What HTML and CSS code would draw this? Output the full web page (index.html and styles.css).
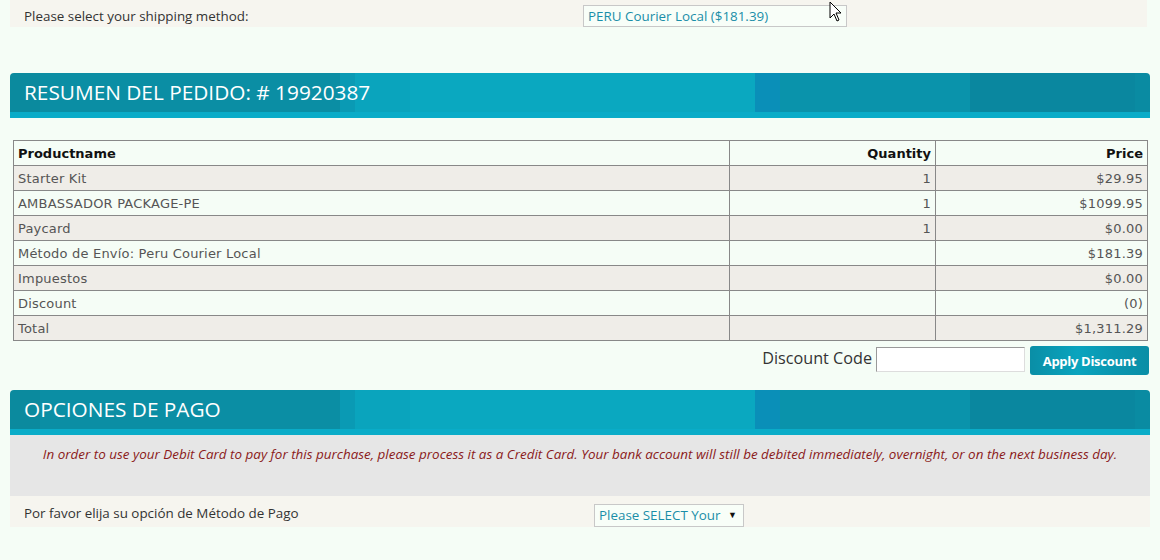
FILE: index.html
```html
<!DOCTYPE html>
<html>
<head>
<meta charset="utf-8">
<link rel="stylesheet" href="styles.css">
</head>
<body>
<div class="page">
  <div class="field-row top-row">
    <div class="field-label">Please select your shipping method:</div>
    <div class="select ship-select">PERU Courier Local ($181.39)</div>
  </div>

  <div class="section-head head-1">RESUMEN DEL PEDIDO: # 19920387</div>

  <table class="order">
    <thead>
      <tr><th class="c1">Productname</th><th class="num">Quantity</th><th class="num">Price</th></tr>
    </thead>
    <tbody>
      <tr class="alt"><td>Starter Kit</td><td class="num">1</td><td class="num">$29.95</td></tr>
      <tr><td>AMBASSADOR PACKAGE-PE</td><td class="num">1</td><td class="num">$1099.95</td></tr>
      <tr class="alt"><td>Paycard</td><td class="num">1</td><td class="num">$0.00</td></tr>
      <tr><td>Método de Envío: Peru Courier Local</td><td class="num"></td><td class="num">$181.39</td></tr>
      <tr class="alt"><td>Impuestos</td><td class="num"></td><td class="num">$0.00</td></tr>
      <tr><td>Discount</td><td class="num"></td><td class="num">(0)</td></tr>
      <tr class="alt"><td>Total</td><td class="num"></td><td class="num">$1,311.29</td></tr>
    </tbody>
  </table>

  <div class="discount-row">
    <span class="discount-label">Discount Code</span>
    <span class="discount-input"></span>
    <span class="btn">Apply Discount</span>
  </div>

  <div class="section-head head-2">OPCIONES DE PAGO</div>
  <div class="note">In order to use your Debit Card to pay for this purchase, please process it as a Credit Card. Your bank account will still be debited immediately, overnight, or on the next business day.</div>
  <div class="field-row pay-row">
    <div class="field-label">Por favor elija su opción de Método de Pago</div>
    <div class="select pay-select">Please SELECT Your <span class="caret">▼</span></div>
  </div>
</div>
<svg class="cursor" width="14" height="22" viewBox="0 0 14 22"><path d="M1 1 L1 17 L5 13 L8 20 L10 19 L7 12 L12 12 Z" fill="#fff" stroke="#000" stroke-width="1"/></svg>
</body>
</html>
```

FILE: styles.css
```css
html, body { margin: 0; padding: 0; }
body {
  background: #f5fdf6;
  font-family: "Open Sans", "Liberation Sans", sans-serif;
  color: #333;
  width: 1160px;
  height: 560px;
  overflow: hidden;
  position: relative;
}
.page { padding: 0 10px; }

.field-row {
  display: flex;
  align-items: flex-end;
  background: #f6f5ef;
  font-size: 13.4px;
  box-sizing: border-box;
}
.field-label { padding-left: 14px; align-self: center; }
.top-row { height: 27px; width: 1137px; }
.top-row .field-label { padding-top: 4px; width: 559px; }
.select {
  border: 1px solid #c8c8c8;
  background: #f8fef8;
  color: #1a8ea8;
  font-size: 13.4px;
  box-sizing: border-box;
  height: 22px;
  line-height: 20px;
  padding-left: 4px;
  white-space: nowrap;
}
.ship-select { width: 264px; }

.section-head {
  height: 45px;
  box-sizing: border-box;
  border-radius: 4px 4px 0 0;
  color: #fff;
  font-size: 20.8px;
  padding: 4px 0 0 14px;
  line-height: 30px;
  background:
    linear-gradient(#0aacc8, #0aacc8) bottom / 100% 6px no-repeat,
    linear-gradient(90deg,
      #0b8a9e 0, #0b8a9e 30px,
      #0b8ea4 30px, #0b8ea4 330px,
      #0a9ab4 330px, #0a9ab4 345px,
      #0aa4bd 345px, #0aa4bd 400px,
      #0aa8c0 400px, #0aa8c0 745px,
      #0a8fb8 745px, #0a8fb8 770px,
      #0a93ab 770px, #0a93ab 960px,
      #0a879f 960px, #0a879f 1125px,
      #0a8ba2 1125px);
}
.head-1 { margin-top: 46px; }

.order {
  margin: 22px 0 0 3px;
  width: 1135px;
  border-collapse: collapse;
  font-family: "DejaVu Sans", Verdana, sans-serif;
  font-size: 13px;
  letter-spacing: 0.2px;
  color: #555;
}
.order th, .order td {
  border: 1px solid #888;
  height: 25px;
  padding: 0 4px;
  box-sizing: border-box;
  text-align: left;
}
.order th { color: #111; font-weight: bold; letter-spacing: 0; }
.order th.c1 { width: 716px; }
.order th:nth-child(2) { width: 206px; }
.order .num { text-align: right; }
.order tr.alt td { background: #efede8; }

.discount-row {
  display: flex;
  justify-content: flex-end;
  align-items: center;
  margin-top: 5px;
  height: 29px;
  width: 1139px;
}
.discount-label { font-size: 16.2px; margin: 0 4px 5px 0; color: #333; }
.discount-input {
  width: 149px;
  height: 25px;
  box-sizing: border-box;
  border: 1px solid #aaa;
  border-color: #999 #ddd #ddd #999;
  background: #fff;
  margin: 0 5px 2px 0;
}
.btn {
  height: 29px;
  width: 119px;
  box-sizing: border-box;
  border-radius: 3px;
  background: linear-gradient(90deg, #0a8ea6 0, #0aa4be 40%, #0a96b0 70%, #0a8ea6 100%);
  color: #fff;
  font-weight: bold;
  font-size: 13px;
  letter-spacing: -0.3px;
  display: flex;
  align-items: center;
  justify-content: center;
}

.head-2 { margin-top: 15px; }
.note {
  background: #e6e6e6;
  height: 61px;
  box-sizing: border-box;
  padding-top: 10px;
  text-align: center;
  font-style: italic;
  font-size: 13.45px;
  color: #8b1a1a;
}
.pay-row { height: 31px; }
.pay-row .field-label { width: 570px; padding-top: 2px; }
.pay-select { width: 150px; height: 23px; color: #1a8ea8; margin-bottom: 0; }
.caret { font-size: 9px; color: #111; margin-left: 4px; vertical-align: 2px; }

.cursor { position: absolute; left: 829px; top: 1px; }
```
